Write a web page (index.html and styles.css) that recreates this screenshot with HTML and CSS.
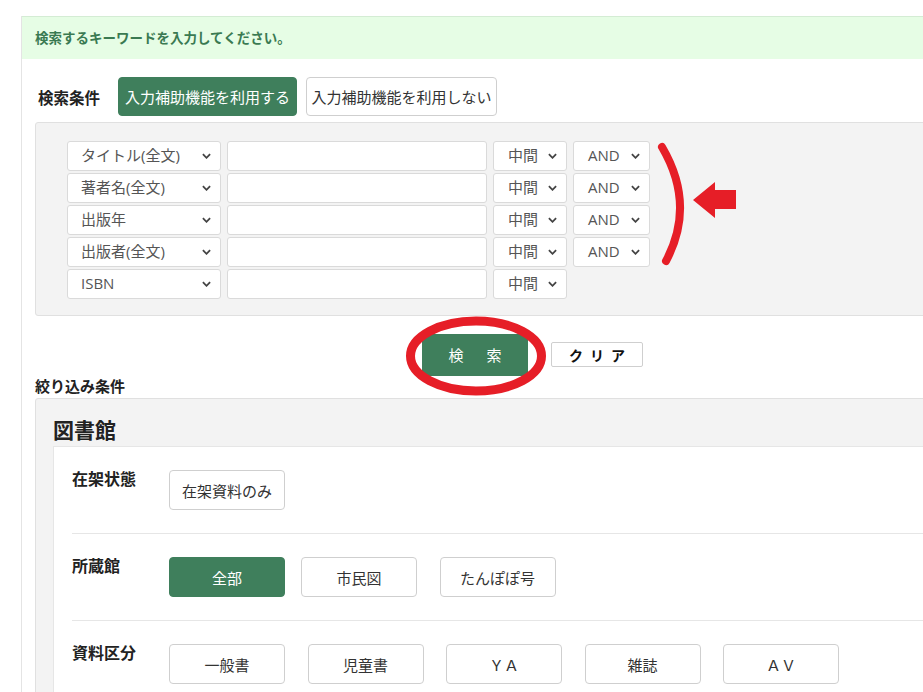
FILE: index.html
```html
<!DOCTYPE html>
<html lang="ja">
<head>
<meta charset="utf-8">
<title>検索</title>
<link rel="stylesheet" href="styles.css">
</head>
<body>
<div class="page">
  <div class="notice">検索するキーワードを入力してください。</div>
  <div class="mode-row">
    <span class="mode-label">検索条件</span>
    <button class="btn btn-green mode-btn mode-on">入力補助機能を利用する</button>
    <button class="btn mode-btn mode-off">入力補助機能を利用しない</button>
  </div>
  <div class="panel query-panel">
    <div class="qrow">
      <div class="sel sel-field"><span>タイトル(全文)</span><svg class="chev" viewBox="0 0 10 6"><path d="M1 1l4 4 4-4"/></svg></div>
      <div class="txt"></div>
      <div class="sel sel-match"><span>中間</span><svg class="chev" viewBox="0 0 10 6"><path d="M1 1l4 4 4-4"/></svg></div>
      <div class="sel sel-op"><span>AND</span><svg class="chev" viewBox="0 0 10 6"><path d="M1 1l4 4 4-4"/></svg></div>
    </div>
    <div class="qrow">
      <div class="sel sel-field"><span>著者名(全文)</span><svg class="chev" viewBox="0 0 10 6"><path d="M1 1l4 4 4-4"/></svg></div>
      <div class="txt"></div>
      <div class="sel sel-match"><span>中間</span><svg class="chev" viewBox="0 0 10 6"><path d="M1 1l4 4 4-4"/></svg></div>
      <div class="sel sel-op"><span>AND</span><svg class="chev" viewBox="0 0 10 6"><path d="M1 1l4 4 4-4"/></svg></div>
    </div>
    <div class="qrow">
      <div class="sel sel-field"><span>出版年</span><svg class="chev" viewBox="0 0 10 6"><path d="M1 1l4 4 4-4"/></svg></div>
      <div class="txt"></div>
      <div class="sel sel-match"><span>中間</span><svg class="chev" viewBox="0 0 10 6"><path d="M1 1l4 4 4-4"/></svg></div>
      <div class="sel sel-op"><span>AND</span><svg class="chev" viewBox="0 0 10 6"><path d="M1 1l4 4 4-4"/></svg></div>
    </div>
    <div class="qrow">
      <div class="sel sel-field"><span>出版者(全文)</span><svg class="chev" viewBox="0 0 10 6"><path d="M1 1l4 4 4-4"/></svg></div>
      <div class="txt"></div>
      <div class="sel sel-match"><span>中間</span><svg class="chev" viewBox="0 0 10 6"><path d="M1 1l4 4 4-4"/></svg></div>
      <div class="sel sel-op"><span>AND</span><svg class="chev" viewBox="0 0 10 6"><path d="M1 1l4 4 4-4"/></svg></div>
    </div>
    <div class="qrow">
      <div class="sel sel-field"><span>ISBN</span><svg class="chev" viewBox="0 0 10 6"><path d="M1 1l4 4 4-4"/></svg></div>
      <div class="txt"></div>
      <div class="sel sel-match"><span>中間</span><svg class="chev" viewBox="0 0 10 6"><path d="M1 1l4 4 4-4"/></svg></div>
    </div>
  </div>
  <div class="action-row">
    <button class="btn btn-green search-btn">検　索</button>
    <button class="btn clear-btn">クリア</button>
  </div>
  <div class="filter-title">絞り込み条件</div>
  <div class="panel filter-panel">
    <h2 class="lib-title">図書館</h2>
    <div class="inner">
      <div class="frow">
        <div class="flabel">在架状態</div>
        <div class="opts">
          <button class="btn opt">在架資料のみ</button>
        </div>
      </div>
      <div class="frow">
        <div class="flabel">所蔵館</div>
        <div class="opts">
          <button class="btn btn-green opt">全部</button>
          <button class="btn opt near">市民図</button>
          <button class="btn opt">たんぽぽ号</button>
        </div>
      </div>
      <div class="frow last">
        <div class="flabel">資料区分</div>
        <div class="opts">
          <button class="btn opt">一般書</button>
          <button class="btn opt">児童書</button>
          <button class="btn opt">ＹＡ</button>
          <button class="btn opt">雑誌</button>
          <button class="btn opt">ＡＶ</button>
        </div>
      </div>
    </div>
  </div>
</div>
<svg class="marks" viewBox="0 0 923 692" width="923" height="692">
  <path class="bracket" d="M662 147 Q 696 205 666 261"/>
  <polygon class="arrow" points="693,200 715,182 715,190 736,190 736,209 715,209 715,218"/>
  <ellipse class="ring" cx="476" cy="356" rx="65.5" ry="35"/>
</svg>
</body>
</html>
```
FILE: styles.css
```css
html, body {
  margin: 0;
  padding: 0;
  overflow: hidden;
  background: #fff;
}
body {
  position: relative;
  width: 923px;
  height: 692px;
  font-family: "Noto Sans CJK JP", "Noto Sans", sans-serif;
  color: #333;
}
.page {
  margin: 16px 0 0 21px;
  width: 1040px;
  height: 676px;
  overflow: hidden;
  border-left: 1px solid #e4e4e4;
  padding-left: 13px;
  box-sizing: border-box;
}
.notice {
  margin-left: -13px;
  height: 43px;
  background: #e6fde5;
  border-top: 1px solid #d4ecd4;
  box-sizing: border-box;
  padding-left: 13px;
  display: flex;
  align-items: center;
  font-size: 13.5px;
  font-weight: bold;
  color: #3a7a52;
  line-height: 1;
}
.mode-row {
  display: flex;
  align-items: center;
  margin-top: 18px;
  padding-left: 3px;
}
.mode-label {
  font-size: 15.5px;
  font-weight: bold;
  color: #222;
  width: 80px;
}
.btn {
  font-family: inherit;
  font-size: 15px;
  line-height: 1;
  color: #333;
  background: #fff;
  border: 1px solid #cfcfcf;
  border-radius: 4px;
  padding: 0;
  display: flex;
  align-items: center;
  justify-content: center;
  box-sizing: border-box;
}
.btn-green {
  background: #3f7f5c;
  border-color: #3f7f5c;
  color: #fff;
}
.mode-btn {
  height: 39px;
  margin-right: 9px;
  white-space: nowrap;
}
.mode-on { width: 179px; }
.mode-off { width: 191px; }
.panel {
  background: #f3f3f3;
  border: 1px solid #e0e0e0;
  border-radius: 3px;
}
.query-panel {
  margin-top: 6px;
  height: 194px;
  box-sizing: border-box;
  padding: 18px 0 0 31px;
  display: flex;
  flex-direction: column;
  gap: 2px;
}
.qrow {
  display: flex;
  gap: 6px;
  height: 30px;
}
.sel, .txt {
  height: 30px;
  box-sizing: border-box;
  background: #fff;
  border: 1px solid #dadada;
  border-radius: 3px;
}
.sel {
  display: flex;
  align-items: center;
  justify-content: space-between;
  padding: 0 9px 0 13px;
  font-family: "Open Sans", "Noto Sans CJK JP", sans-serif;
  font-size: 15px;
  color: #555;
  line-height: 1;
  white-space: nowrap;
}
.sel span { padding-bottom: 1px; }
.sel-field { width: 154px; }
.txt { width: 260px; }
.sel-match { width: 74px; padding-left: 14px; }
.sel-op { width: 77px; padding-left: 14px; }
.chev {
  width: 9px;
  height: 6px;
  flex: none;
  fill: none;
  stroke: #444;
  stroke-width: 2;
}
.action-row {
  display: flex;
  align-items: center;
  padding-left: 387px;
  margin-top: 17px;
  height: 43px;
}
.search-btn {
  width: 106px;
  height: 42px;
  border-radius: 0;
  letter-spacing: 4px;
  padding-left: 4px;
  margin-right: 23px;
}
.clear-btn {
  width: 92px;
  height: 25px;
  border-radius: 2px;
  font-size: 14px;
  font-weight: bold;
  color: #111;
  letter-spacing: 7px;
  padding-left: 7px;
}
.filter-title {
  margin-top: 0;
  font-size: 15px;
  font-weight: bold;
  color: #222;
  line-height: 20px;
}
.filter-panel {
  margin-top: 2px;
  padding: 17px 0 0 17px;
  height: 320px;
  box-sizing: border-box;
}
.lib-title {
  margin: 0 0 3px;
  font-size: 21px;
  font-weight: bold;
  color: #222;
  line-height: 27px;
}
.inner {
  background: #fff;
  border: 1px solid #e6e6e6;
  padding-left: 18px;
  height: 300px;
}
.frow {
  display: flex;
  padding: 23px 0;
  border-bottom: 1px solid #e6e6e6;
}
.frow.last { border-bottom: 0; }
.flabel {
  width: 97px;
  font-size: 16px;
  font-weight: bold;
  color: #222;
  line-height: 16px;
}
.opts {
  display: flex;
  gap: 22.5px;
}
.opt {
  width: 116px;
  height: 40px;
}
.opt.near { margin-left: -6.5px; }
.marks {
  position: absolute;
  left: 0;
  top: 0;
  pointer-events: none;
}
.bracket {
  fill: none;
  stroke: #e61e27;
  stroke-width: 8;
  stroke-linecap: round;
}
.arrow { fill: #e61e27; }
.ring {
  fill: none;
  stroke: #e61e27;
  stroke-width: 9;
}
```
